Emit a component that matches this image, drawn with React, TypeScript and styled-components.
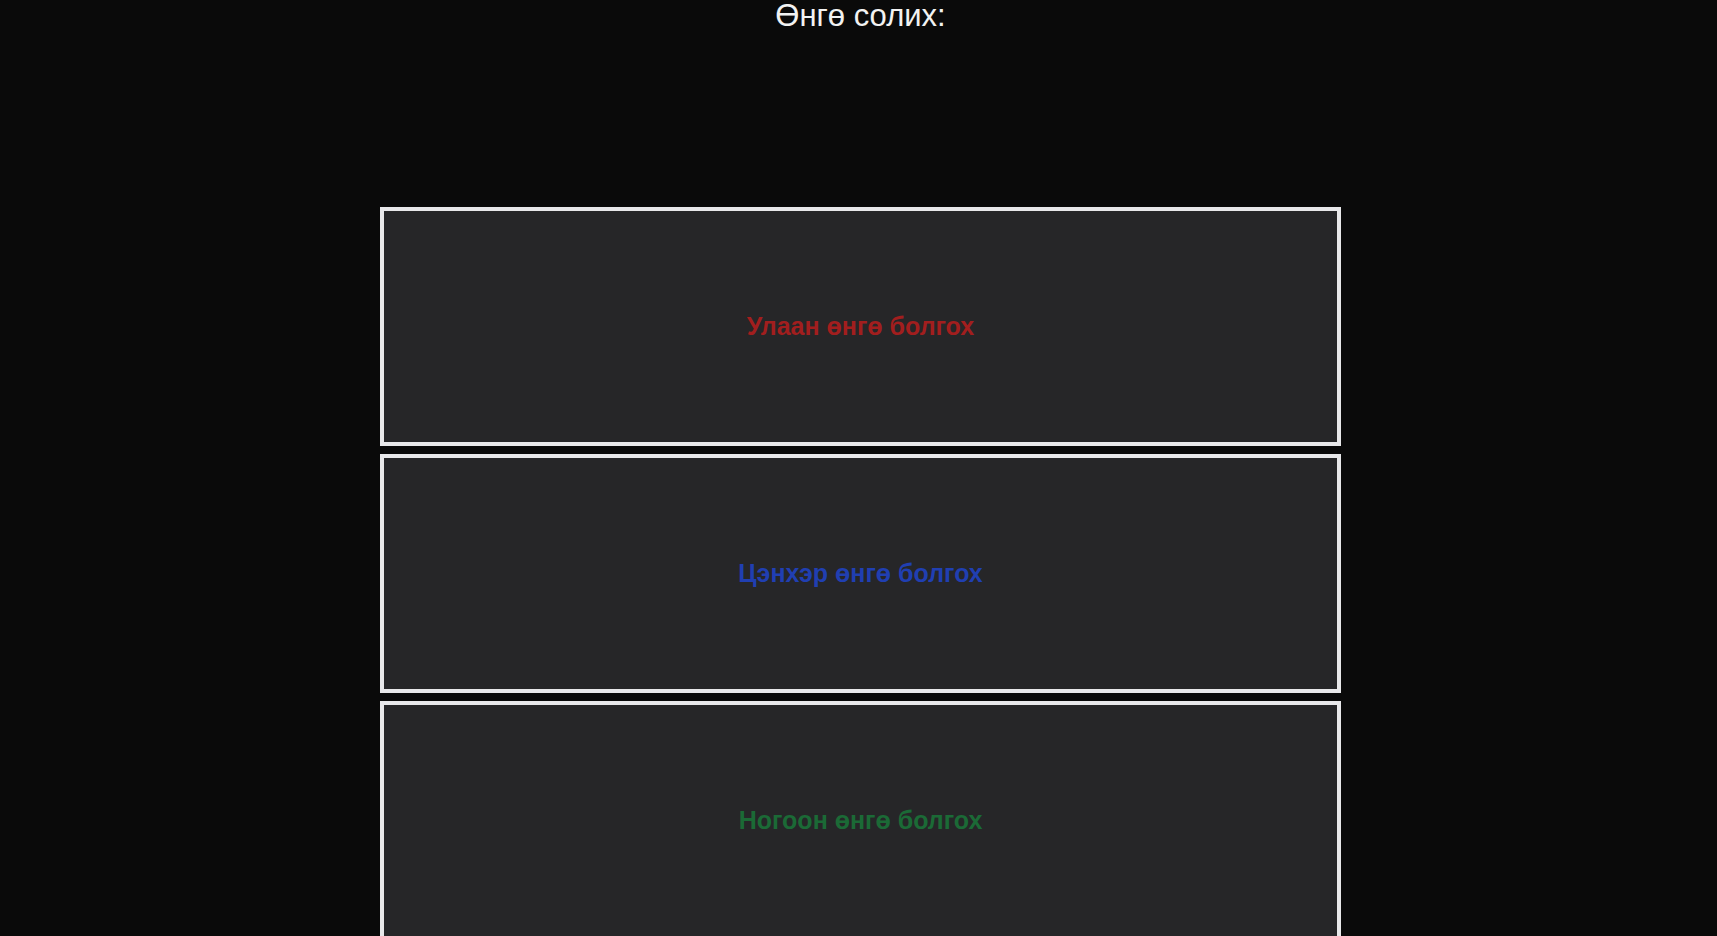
import * as React from 'react';
import styled, { createGlobalStyle } from 'styled-components';

const GlobalStyle = createGlobalStyle`
    html, body {
        margin: 0;
        padding: 0;
        background: #0a0a0a;
        font-family: "Liberation Sans", Arial, sans-serif;
    }
`;

const Page = styled.div`
    min-height: 936px;
    display: flex;
    flex-direction: column;
    align-items: center;
    padding-left: 4px;
    background: #0a0a0a;
`;

const Title = styled.div`
    color: #f2f2f2;
    font-size: 31px;
    line-height: 32px;
    margin-bottom: 175px;
`;

const ButtonList = styled.div`
    display: flex;
    flex-direction: column;
    gap: 8px;
    width: 961px;
`;

const ColorButton = styled.button<{ $color: string }>`
    box-sizing: border-box;
    height: 239px;
    background: #262628;
    border: 4px solid #e8e8ea;
    color: ${p => p.$color};
    font-family: "Liberation Sans", Arial, sans-serif;
    font-weight: bold;
    font-size: 25px;
    cursor: pointer;
`;

const buttons = [
    { label: 'Улаан өнгө болгох', color: '#a21e1e' },
    { label: 'Цэнхэр өнгө болгох', color: '#203fb2' },
    { label: 'Ногоон өнгө болгох', color: '#1b6a36' },
];

export default function App() {
    return (
        <Page>
            <GlobalStyle />
            <Title>Өнгө солих:</Title>
            <ButtonList>
                {buttons.map(el => (
                    <ColorButton key={el.label} $color={el.color}>
                        {el.label}
                    </ColorButton>
                ))}
            </ButtonList>
        </Page>
    );
}
